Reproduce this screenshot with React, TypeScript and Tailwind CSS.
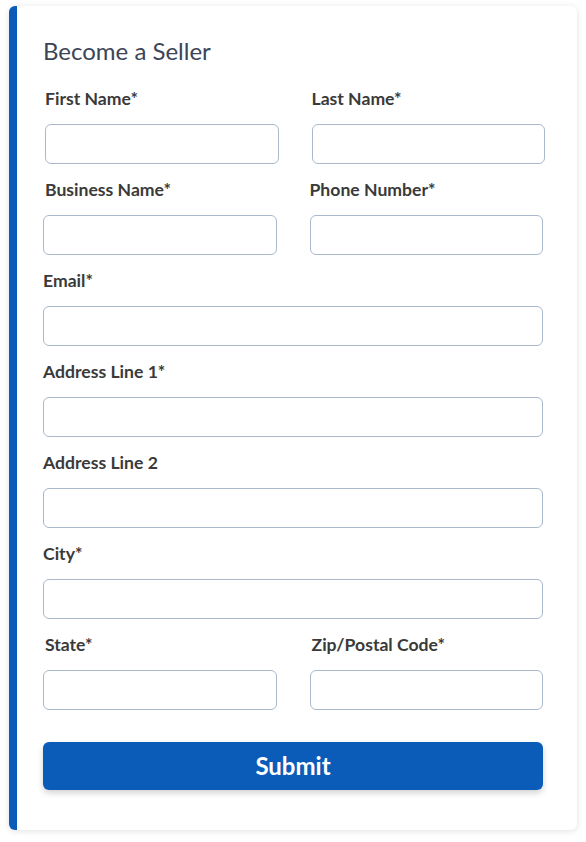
import React from "react";

function Field({ label, className = "" }: { label: string; className?: string }) {
  return (
    <div className={"flex flex-col " + className}>
      <label className="text-[17.6px] leading-[20px] font-bold text-[#3a3a3a] mb-[15px]">{label}</label>
      <input className="h-[40px] w-full rounded-[6px] border border-[#a9b9cb] bg-white outline-none" />
    </div>
  );
}

export default function App() {
  return (
    <div className="min-h-[842px] bg-white pt-[6px] pl-[9px]" style={{ fontFamily: "Lato, 'Noto Sans', sans-serif" }}>
      <div className="w-[568px] h-[824px] bg-white rounded-[6px] border-l-[8px] border-[#0b5cb8] shadow-[0_1px_6px_rgba(0,0,0,0.12)] pl-[26px] pr-[34px] pt-[31px]">
        <h1 className="text-[24px] leading-[28px] text-[#3b4557] mb-[24px]">Become a Seller</h1>
        <div className="flex flex-col gap-[16px]">
          <div className="grid grid-cols-2 gap-[33px] ml-[2px] -mr-[2px]">
            <Field label="First Name*" />
            <Field label="Last Name*" />
          </div>
          <div className="grid grid-cols-2 gap-[33px]">
            <Field label="Business Name*" className="[&>label]:ml-[2px]" />
            <Field label="Phone Number*" />
          </div>
          <Field label="Email*" />
          <Field label="Address Line 1*" />
          <Field label="Address Line 2" />
          <Field label="City*" />
          <div className="grid grid-cols-2 gap-[33px]">
            <Field label="State*" className="[&>label]:ml-[2px]" />
            <Field label="Zip/Postal Code*" className="[&>label]:ml-[2px]" />
          </div>
        </div>
        <button className="mt-[32px] w-full h-[48px] rounded-[6px] bg-[#0b5cb8] text-white text-[24px] font-bold shadow-[0_3px_6px_rgba(0,0,0,0.18)]">
          Submit
        </button>
      </div>
    </div>
  );
}
